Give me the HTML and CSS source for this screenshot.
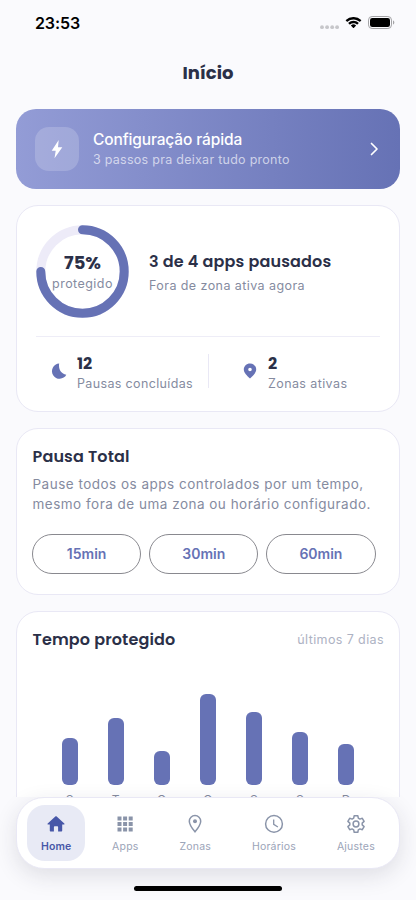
FILE: index.html
```
<!DOCTYPE html>
<html lang="pt-BR">
<head>
<meta charset="utf-8">
<meta name="viewport" content="width=device-width, initial-scale=1">
<title>Início</title>
<link rel="stylesheet" href="styles.css">
</head>
<body>
<div class="phone">
  <div class="scroll">
    <div class="status">
      <span class="time">23:53</span>
      <div class="indicators">
        <svg class="dots" width="19" height="5" viewBox="0 0 19 5"><g fill="#c6c6ca"><circle cx="2" cy="2.2" r="1.9"/><circle cx="7.1" cy="2.2" r="1.9"/><circle cx="12.2" cy="2.2" r="1.9"/><circle cx="17.1" cy="2.2" r="1.9"/></g></svg>
        <svg class="wifi" width="17" height="12" viewBox="0 0 17 12" fill="#000"><path d="M8.5 2.4c2.3 0 4.5.9 6.1 2.4.1.1.3.1.4 0l1.2-1.2c.1-.1.1-.3 0-.5a11.100 11.100 0 0 0-15.400 0c-.1.1-.1.3 0 .5L2 4.800c.1.1.3.1.4 0A9 9 0 0 1 8.500 2.400zM8.500 6.200c1.300 0 2.500.5 3.400 1.300.1.1.3.1.5 0l1.200-1.200c.1-.1.1-.3 0-.5a7.400 7.400 0 0 0-10.200 0c-.1.1-.1.3 0 .5l1.200 1.200c.1.1.3.1.5 0a5 5 0 0 1 3.400-1.300zM10.900 8.800c.1-.1.1-.3 0-.5a3.800 3.800 0 0 0-4.800 0c-.1.1-.1.3 0 .5l2.100 2.100c.2.2.4.2.6 0z"/></svg>
        <svg class="battery" width="27" height="13" viewBox="0 0 27 13"><rect x=".5" y=".5" width="23" height="12" rx="3.600" fill="none" stroke="#a3a3a6"/><rect x="2" y="2" width="20" height="9" rx="2.300" fill="#000"/><path d="M25 4.500v4c.8-.3 1.300-1.100 1.300-2s-.5-1.700-1.300-2z" fill="#a3a3a6"/></svg>
      </div>
    </div>
    <h1 class="title"><span>Início</span></h1>

    <section class="banner">
      <div class="bolt"><svg width="24" height="24" viewBox="0 0 24 24" fill="#fff"><path d="M13.700 3 6.700 13.700h4L9.500 21.300 17.300 10.300h-4.300z"/></svg></div>
      <div class="banner-text">
        <div class="banner-title">Configuração rápida</div>
        <div class="banner-sub">3 passos pra deixar tudo pronto</div>
      </div>
      <svg class="chevron" width="10" height="14" viewBox="0 0 10 14" fill="none" stroke="#fff" stroke-width="1.700" stroke-linecap="round" stroke-linejoin="round"><path d="M2.500 1.500 8 7 2.500 12.500"/></svg>
    </section>

    <section class="card summary">
      <div class="progress-row">
        <div class="ring">
          <svg width="94" height="94" viewBox="0 0 94 94" fill="none" stroke-width="9"><circle cx="47.500" cy="47.500" r="41.700" stroke="#edebf8"/><path d="M47.500 5.800A41.700 41.700 0 1 1 5.800 47.500" stroke="#6672b5" stroke-linecap="round"/></svg>
          <div class="ring-label"><strong>75%</strong><span>protegido</span></div>
        </div>
        <div class="progress-text">
          <h2 class="paused">3 de 4 apps pausados</h2>
          <p class="zone">Fora de zona ativa agora</p>
        </div>
      </div>
      <div class="stats">
        <div class="stat">
          <svg width="16" height="16" viewBox="0 0 16 16" fill="#6672b5"><path d="M8.200.6C7.300 5.700 9.500 10.500 15.300 11.700A7.600 7.600 0 1 1 8.200.6z"/></svg>
          <div><strong>12</strong><span class="done">Pausas concluídas</span></div>
        </div>
        <div class="stat">
          <svg width="16" height="16" viewBox="0 0 16 16" fill="#6672b5" fill-rule="evenodd"><path d="M8 .500c3.500 0 6.200 2.600 6.200 6.100 0 3.300-3.300 6.300-6.200 8.900-2.900-2.600-6.200-5.600-6.200-8.900C1.800 3.100 4.500.5 8 .5zM8 4.700a1.800 1.800 0 1 0 0 3.600 1.800 1.800 0 0 0 0-3.600z"/></svg>
          <div><strong>2</strong><span class="zones">Zonas ativas</span></div>
        </div>
      </div>
    </section>

    <section class="card pause">
      <h2 class="pause-title">Pausa Total</h2>
      <p>Pause todos os apps controlados por um tempo,<br>mesmo fora de uma zona ou horário configurado.</p>
      <div class="buttons"><button>15min</button><button>30min</button><button>60min</button></div>
    </section>

    <section class="card chart-card">
      <div class="chart-head"><h2 class="chart-title">Tempo protegido</h2><span>últimos 7 dias</span></div>
      <div class="chart">
        <div class="col"><i style="height:47.500px"></i><span>S</span></div>
        <div class="col"><i style="height:67.500px"></i><span>T</span></div>
        <div class="col"><i style="height:34.500px"></i><span>Q</span></div>
        <div class="col"><i style="height:91.500px"></i><span>Q</span></div>
        <div class="col"><i style="height:73.500px"></i><span>S</span></div>
        <div class="col"><i style="height:53.500px"></i><span>S</span></div>
        <div class="col"><i style="height:41.500px"></i><span>D</span></div>
      </div>
    </section>
  </div>

  <nav class="tabs">
    <a class="tab active"><svg width="20" height="20" viewBox="0 0 20 20" fill="#4757a8"><path d="M9.300 2.500 1.700 9.600c-.4.500-.2 1 .4 1h1.700v6c0 .6.400 1 1 1h3.100v-4.700c0-.4.300-.7.700-.7h2.800c.4 0 .7.3.7.7v4.700h3.100c.6 0 1-.4 1-1v-6h1.700c.6 0 .8-.5.4-1l-7.600-7.100c-.4-.4-1-.4-1.400 0z"/></svg><span>Home</span></a>
    <a class="tab"><svg width="20" height="20" viewBox="0 0 20 20" fill="#8a94a9"><path d="M2.500 2.500h4v4h-4zM8.100 2.500h4v4h-4zM13.700 2.500h4v4h-4zM2.500 8h4v4h-4zM8.100 8h4v4h-4zM13.700 8h4v4h-4zM2.500 13.500h4v4h-4zM8.100 13.500h4v4h-4zM13.700 13.500h4v4h-4z"/></svg><span>Apps</span></a>
    <a class="tab"><svg width="20" height="20" viewBox="0 0 20 20" fill="none" stroke="#8a94a9" stroke-width="1.500"><path d="M10 1.500A5.700 5.700 0 0 0 4.300 7.200C4.300 11 10 17.800 10 17.800S15.700 11 15.700 7.200A5.700 5.700 0 0 0 10 1.500z"/><circle cx="10" cy="7.200" r="2" fill="#8a94a9" stroke="none"/></svg><span>Zonas</span></a>
    <a class="tab"><svg width="20" height="20" viewBox="0 0 20 20" fill="none" stroke="#8a94a9" stroke-width="1.500"><circle cx="10" cy="9.900" r="8.400"/><path d="M9.700 5.400v5l4.200 2.600" stroke-width="1.300"/></svg><span>Horários</span></a>
    <a class="tab"><svg width="20" height="20" viewBox="0 0 20 20" fill="none" stroke="#8a94a9" stroke-width="1.500" stroke-linejoin="round"><path d="M8.200 1.700h3.600l.5 2.500 1.600.9 2.400-.8 1.800 3.100-1.900 1.700v1.800l1.900 1.700-1.800 3.100-2.400-.8-1.600.9-.5 2.500H8.200l-.5-2.500-1.600-.9-2.400.8-1.800-3.100 1.900-1.700V9.100L1.900 7.400l1.800-3.100 2.400.8 1.600-.9z"/><circle cx="10" cy="10" r="2.900"/></svg><span>Ajustes</span></a>
  </nav>
  <div class="home-indicator"></div>
</div>
</body>
</html>
```
FILE: styles.css
```
* { box-sizing: border-box; }
body { margin: 0; background: #fafafd; font-family: Inter, sans-serif; color: #2b3048; }
h1, h2, p { margin: 0; }
svg { display: block; flex: none; }
.phone { height: 900px; display: flex; flex-direction: column; overflow: hidden; }
.scroll { height: 797px; flex: none; overflow: hidden; padding: 0 16px; }
.status { height: 46px; display: flex; justify-content: space-between; padding: 14px 5px 0 19px; }
.time { font-size: 16px; line-height: 19px; font-weight: 600; color: #000; letter-spacing: -.1px; }
.indicators { display: flex; padding-top: 2px; }
.dots { margin-top: 9px; }
.wifi { margin: 1px 0 0 6px; }
.battery { margin-left: 6px; }
.title, h2, strong { font-family: Poppins, Inter, sans-serif; color: #2b3048; }
.title { height: 63px; font-size: 18px; line-height: 54px; font-weight: 700; text-align: center; }
.banner { height: 80px; border-radius: 20px; display: flex; align-items: center; padding: 0 21px 0 19px; background: linear-gradient(90deg, #939cd6, #6672b5); color: #fff; }
.bolt { width: 44px; height: 44px; border-radius: 14px; background: rgba(255,255,255,.18); display: flex; align-items: center; justify-content: center; }
.banner-text { flex: 1; padding: 1px 0 0 14px; }
.banner-title { font-size: 15.500px; line-height: 21px; font-weight: 500; letter-spacing: -.13px; }
.banner-sub { font-size: 12.500px; line-height: 20px; color: rgba(255,255,255,.65); letter-spacing: .27px; }
.card { border: 1px solid #e9e8f5; border-radius: 22px; background: #fff; }
.summary { margin-top: 16px; height: 207px; padding: 18px 19px 0; }
.progress-row { display: flex; align-items: center; height: 112px; padding-bottom: 18px; }
.ring { display: grid; width: 94px; height: 94px; margin-left: -1px; }
.ring > * { grid-area: 1 / 1; }
.ring-label { display: flex; flex-direction: column; align-items: center; padding: 28px 0 0 1px; }
.ring-label strong { font-size: 18px; line-height: 22px; }
.ring-label span { font-size: 12.500px; line-height: 19px; color: #858b9f; letter-spacing: .45px; }
.progress-text { padding: 4px 0 0 20px; }
.paused { font-size: 16px; line-height: 26px; font-weight: 600; letter-spacing: .17px; }
.zone { font-size: 12.500px; line-height: 22px; color: #858b9f; letter-spacing: .43px; }
.stats { border-top: 1px solid #eeedf7; display: flex; padding-top: 17px; }
.stat { flex: 0 0 172px; display: flex; align-items: center; gap: 10px; padding: 3px 0 0 15px; height: 34px; }
.stat + .stat { border-left: 1px solid #e9e8f5; padding-left: 33px; }
.stat svg { margin-bottom: 3px; }
.stat > div { display: flex; flex-direction: column; }
.stat strong { font-size: 16px; line-height: 21px; }
.stat span { font-size: 12.500px; line-height: 19px; color: #858b9f; letter-spacing: .35px; white-space: nowrap; }
.stat .zones { letter-spacing: .4px; }
.pause { margin-top: 16px; height: 167px; padding: 15px 23.500px 0 15.500px; }
.pause h2, .chart-head h2 { font-size: 16px; line-height: 26px; font-weight: 600; letter-spacing: .15px; }
.pause p { font-size: 13.500px; line-height: 20px; padding-top: 4px; color: #858b9f; letter-spacing: .49px; white-space: nowrap; }
.buttons { display: flex; gap: 8px; margin: 20px 0 0 -.5px; }
.buttons button { flex: 1; height: 40px; padding: 0; border: 1px solid #89898f; border-radius: 20px; background: #fff; font: 600 14px/20px Inter, sans-serif; color: #6672b5; }
.chart-card { margin-top: 16px; height: 230px; padding: 15px 15px 0 15.500px; }
.chart-head { display: flex; justify-content: space-between; align-items: center; }
.chart-head span { font-size: 12.500px; line-height: 15px; padding-bottom: 2px; color: #adb2c3; letter-spacing: .4px; }
.chart { height: 159px; padding: 0 15px 0 14px; display: flex; align-items: flex-end; }
.col { flex: 1; display: flex; flex-direction: column; align-items: center; }
.col i { width: 16px; border-radius: 6px; background: #6672b5; }
.col span { font-size: 12px; line-height: 15px; margin-top: 7px; height: 20px; color: #858b9f; }
.tabs { flex: none; height: 72px; margin: 0 16px; border: 1px solid #e9e8f5; border-radius: 28px; background: #fff; display: flex; justify-content: space-between; align-items: center; padding: 0 10px 0 10px; box-shadow: 0 7px 22px rgba(40,40,60,.13); }
.tab { height: 56px; border-radius: 18px; display: flex; flex-direction: column; align-items: center; padding: 9px 14px 0; gap: 5px; font-size: 10.500px; line-height: 15px; color: #9ba4b8; letter-spacing: .22px; }
.active { background: #e8eaf5; color: #4757a8; font-weight: 600; letter-spacing: .1px; }
.home-indicator { width: 148px; height: 5px; margin: 17px auto 0; border-radius: 3px; background: #000; flex: none; }
```
